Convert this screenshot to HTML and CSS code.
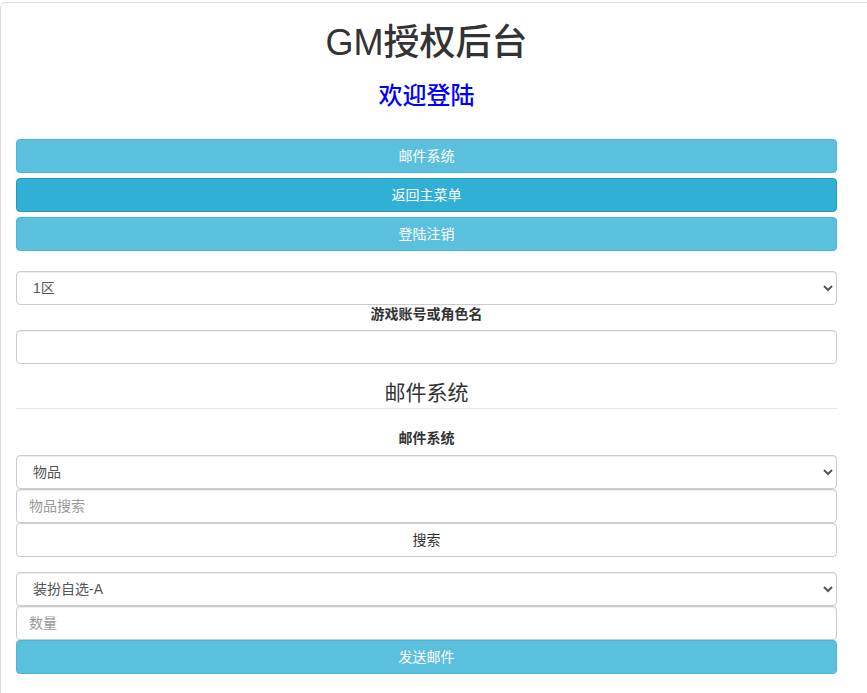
FILE: index.html
```html
<!DOCTYPE html>
<html lang="zh-CN">
<head>
    <meta charset="UTF-8">
    <meta name="viewport" content="width=device-width, initial-scale=1.0">
    <title>GM授权后台</title>
    <link rel="stylesheet" href="styles.css">
</head>
<body>
    <div class="panel">
        <h1>GM授权后台</h1>
        <h3 class="welcome">欢迎登陆</h3>

        <div class="menu">
            <button type="button" class="btn btn-info">邮件系统</button>
            <button type="button" class="btn btn-info active">返回主菜单</button>
            <button type="button" class="btn btn-info">登陆注销</button>
        </div>

        <form id="mail-form">
            <select class="form-control" id="server">
                <option>1区</option>
                <option>2区</option>
            </select>
            <label class="label-center" for="account">游戏账号或角色名</label>
            <input type="text" class="form-control" id="account">

            <fieldset>
                <legend>邮件系统</legend>
                <label class="label-center">邮件系统</label>
                <div class="group">
                    <select class="form-control" id="type">
                        <option>物品</option>
                    </select>
                    <input type="text" class="form-control" id="keyword" placeholder="物品搜索">
                    <button type="button" class="btn btn-default">搜索</button>
                </div>
                <div class="group">
                    <select class="form-control" id="item">
                        <option>装扮自选-A</option>
                    </select>
                    <input type="text" class="form-control" id="amount" placeholder="数量">
                    <button type="button" class="btn btn-info">发送邮件</button>
                </div>
            </fieldset>
        </form>
        <p class="footer">&nbsp;</p>
    </div>
</body>
</html>
```

FILE: styles.css
```css
html, body {
    overflow: hidden;
}
body {
    margin: 0;
    padding-top: 2px;
    font-family: "Liberation Sans", Arial, "Noto Sans CJK SC", sans-serif;
    font-size: 14px;
    line-height: 1.42857;
    color: #333;
    background: #fff;
}
.panel {
    width: 821px;
    padding: 0 46px 40px 15px;
    border: 1px solid #ddd;
    border-radius: 6px;
}
h1, h3 {
    text-align: center;
    font-weight: 500;
    line-height: 1.1;
}
h1 {
    font-size: 36px;
    margin: 20px 0 10px;
}
h3 {
    font-size: 24px;
    margin: 20px 0 10px;
}
.welcome {
    color: #0000ff;
}
.menu {
    margin-top: 30px;
    margin-bottom: 20px;
}
.btn {
    display: block;
    width: 100%;
    height: 34px;
    padding: 6px 12px;
    font-family: inherit;
    font-size: 14px;
    line-height: 20px;
    text-align: center;
    border: 1px solid transparent;
    border-radius: 4px;
    box-sizing: border-box;
    cursor: pointer;
}
.menu .btn + .btn {
    margin-top: 5px;
}
.btn-info {
    color: #fff;
    background-color: #5bc0de;
    border-color: #46b8da;
}
.btn-info.active {
    background-color: #31b0d5;
    border-color: #269abc;
}
.btn-default {
    color: #333;
    background-color: #fff;
    border-color: #ccc;
}
.form-control {
    display: block;
    width: 100%;
    height: 34px;
    padding: 6px 12px;
    font-family: inherit;
    font-size: 14px;
    line-height: 20px;
    color: #555;
    background-color: #fff;
    border: 1px solid #ccc;
    border-radius: 4px;
    box-shadow: inset 0 1px 1px rgba(0, 0, 0, .075);
    box-sizing: border-box;
}
.form-control::placeholder {
    color: #999;
}
.label-center {
    display: block;
    text-align: center;
    font-weight: bold;
    margin-bottom: 5px;
}
form {
    margin: 0;
}
fieldset {
    margin: 14px 0 0;
    padding: 0;
    border: 0;
    min-width: 0;
}
legend {
    display: block;
    width: 100%;
    padding: 0;
    margin-bottom: 20px;
    font-size: 21px;
    line-height: 30px;
    text-align: center;
    color: #333;
    border-bottom: 1px solid #e5e5e5;
}
fieldset .label-center {
    margin-bottom: 6px;
}
.group + .group {
    margin-top: 15px;
}
.footer {
    margin: 14px 0 0;
    text-align: center;
}
```
